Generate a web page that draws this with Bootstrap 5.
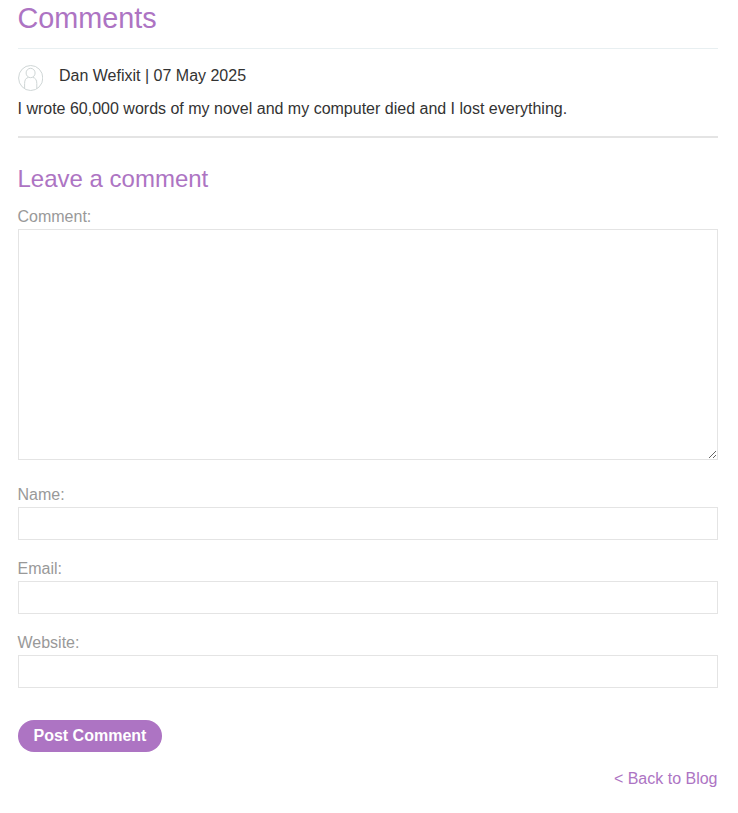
<!DOCTYPE html>
<html lang="en">
<head>
<meta charset="utf-8">
<meta name="viewport" content="width=device-width, initial-scale=1">
<title>Comments</title>
<link rel="stylesheet" href="https://cdn.jsdelivr.net/npm/bootstrap@5.3.0/dist/css/bootstrap.min.css">
<style>
body { font-family: "Liberation Sans", Arial, sans-serif; font-size: 16px; line-height: 24px; color: #333; background: #fff; }
.blog-comments { width: 700px; margin-left: 17.5px; padding-top: 1px; }
.brand-text { color: #ad74c3; }
.page-heading { font-size: 28.8px; line-height: 35px; padding-bottom: 12px; border-bottom: 1px solid #e8eff1; }
.comment-item { padding: 15px 0 15px; border-bottom: 2px solid #e4e4e4; }
.avatar { width: 25px; height: 26px; margin: 1px 16.5px 0 0; }
.comment-copy { margin-top: 6px; }
.form-heading { font-size: 24px; line-height: 29px; margin: 26px 0 12px; }
.form-label { color: #999; }
.form-control { border-color: #e4e4e4; height: 33px; }
textarea.form-control { height: 231px; resize: both; }
.field-name { margin-top: 23px; }
.field-gap { margin-top: 17px; }
.btn-post { background: #ad74c3; color: #fff; height: 32px; margin-top: 32px; }
.btn-post:hover { background: #995fb0; color: #fff; }
.back-row { margin-top: 15px; }
</style>
</head>
<body>
<main class="blog-comments">
  <h1 class="page-heading brand-text fw-normal mb-0">Comments</h1>
  <article class="comment-item">
    <div class="d-flex align-items-start">
      <svg class="avatar flex-shrink-0" viewBox="0 0 25 26" preserveAspectRatio="none" fill="none" stroke="#cfd6d6" stroke-width="1" aria-hidden="true">
        <ellipse cx="12.7" cy="13" rx="12.1" ry="12.5"/>
        <ellipse cx="12.6" cy="8" rx="4.5" ry="4.7"/>
        <path d="M6.6 23.8V18.5Q6.6 13.2 10.4 12.4M14.8 12.4Q18.8 13.2 18.8 18.5V23.8"/>
      </svg>
      <span>Dan Wefixit | 07 May 2025</span>
    </div>
    <p class="comment-copy mb-0">I wrote 60,000 words of my novel and my computer died and I lost everything.</p>
  </article>
  <h2 class="form-heading brand-text fw-normal">Leave a comment</h2>
  <form>
    <div>
      <label class="form-label d-block mb-0" for="comment">Comment:</label>
      <textarea class="form-control rounded-0 d-block" id="comment"></textarea>
    </div>
    <div class="field-name">
      <label class="form-label d-block mb-0" for="name">Name:</label>
      <input class="form-control rounded-0" type="text" id="name">
    </div>
    <div class="field-gap">
      <label class="form-label d-block mb-0" for="email">Email:</label>
      <input class="form-control rounded-0" type="email" id="email">
    </div>
    <div class="field-gap">
      <label class="form-label d-block mb-0" for="website">Website:</label>
      <input class="form-control rounded-0" type="url" id="website">
    </div>
    <button class="btn btn-post rounded-pill border-0 fw-bold py-0 px-3 d-block" type="button">Post Comment</button>
  </form>
  <div class="back-row text-end"><a class="brand-text text-decoration-none" href="#">&lt; Back to Blog</a></div>
</main>
<script src="https://cdn.jsdelivr.net/npm/bootstrap@5.3.0/dist/js/bootstrap.bundle.min.js"></script>
</body>
</html>
